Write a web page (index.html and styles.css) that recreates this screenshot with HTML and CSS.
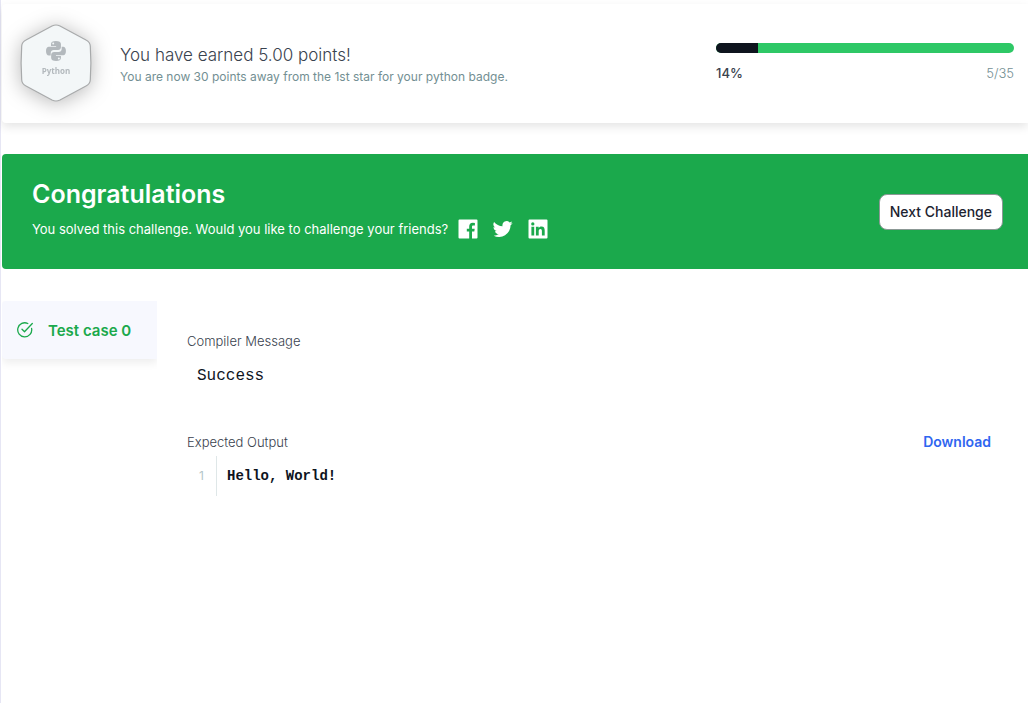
FILE: index.html
```html
<!DOCTYPE html>
<html lang="en">
<head>
<meta charset="utf-8">
<title>Challenge result</title>
<link rel="stylesheet" href="styles.css">
</head>
<body>
<main class="page">
  <section class="points-card">
    <svg class="badge" viewBox="0 0 72 78" role="img" aria-label="Python">
      <path d="M32 2Q36 0 40 2L66 16Q70 18 70.300 22Q71.500 39 70.300 56Q70 60 66 62L40 76Q36 78 32 76L6 62Q2 60 1.700 56Q.5 39 1.700 22Q2 18 6 16Z" fill="#f3f7f8" stroke="#a8aaab" stroke-width="1.200"/>
      <g transform="translate(26 17) scale(.83)" fill="#b3b9bd">
        <path d="M11.900 0C8 0 6 1.300 6 3.500V6h6.200v.9H3.500C1.200 6.900 0 9 0 12s1.200 5.500 3.500 5.500h2.200v-3c0-2 1.600-3.600 3.600-3.600h5.300c1.900 0 3.400-1.400 3.400-3.300V3.500C18 1.300 15.800 0 11.900 0ZM8.700 1.700a1.200 1.200 0 1 1 0 2.400 1.200 1.200 0 0 1 0-2.400Z"/>
        <path d="M18.900 6.900v2.800c0 2.200-1.700 3.700-3.700 3.700H9.700c-1.900 0-3.500 1.400-3.500 3.300v3.800C6.200 22.700 8.400 24 12.200 24s5.800-1.300 5.800-3.500V18h-6v-.9h8.700c2.300 0 3.300-2.200 3.300-5.100s-1.200-5.100-3.300-5.100ZM15.500 20a1.200 1.200 0 1 1 0 2.400 1.200 1.200 0 0 1 0-2.400Z"/>
      </g>
      <text class="badge-name" x="36" y="50" text-anchor="middle">Python</text>
    </svg>
    <div class="points-text">
      <h2 class="points-title">You have earned 5.00 points!</h2>
      <p class="points-note">You are now 30 points away from the 1st star for your python badge.</p>
    </div>
    <div class="progress">
      <div class="progress-track" role="progressbar" aria-label="Badge progress" aria-valuenow="14" aria-valuemin="0" aria-valuemax="100"><div class="progress-fill" style="width:14%"></div></div>
      <div class="progress-labels"><span class="percent">14%</span><span class="score">5/35</span></div>
    </div>
  </section>

  <section class="banner">
    <div class="banner-text">
      <h1 class="banner-title">Congratulations</h1>
      <div class="share">
        <p class="share-text">You solved this challenge. Would you like to challenge your friends?</p>
        <div class="socials">
          <a class="social" href="#facebook" aria-label="Facebook"><svg viewBox="0 0 20 20"><path fill="#fff" d="M1.500.5h17q1 0 1 1v17q0 1-1 1h-4.500v-7h2.300l.4-2.700h-2.700V7.900c0-.9.3-1.400 1.500-1.400h1.400V3.900l-2.100-.1c-2.400 0-3.600 1.400-3.600 3.700v2.300H8.800v2.700h2.400v7h-9.700q-1 0-1-1v-17q0-1 1-1Z"/></svg></a>
          <a class="social" href="#twitter" aria-label="Twitter"><svg viewBox="0 0 24 24"><path fill="#fff" d="M23.600 4.900c-.9.400-1.800.7-2.800.8 1-.6 1.800-1.600 2.200-2.700-1 .6-2 1-3.100 1.200A4.900 4.900 0 0 0 11.500 8.700 14 14 0 0 1 1.300 3.600a4.900 4.900 0 0 0 1.500 6.600c-.8 0-1.600-.2-2.200-.6v.1c0 2.400 1.700 4.400 3.900 4.800-.7.200-1.500.2-2.200.1.600 2 2.400 3.400 4.600 3.400A9.900 9.900 0 0 1 .8 20 14 14 0 0 0 21.100 7.500c1-.7 1.800-1.600 2.500-2.600Z"/></svg></a>
          <a class="social" href="#linkedin" aria-label="LinkedIn"><svg viewBox="0 0 20 20"><path fill="#fff" fill-rule="evenodd" d="M1.500.5h17q1 0 1 1v17q0 1-1 1h-17q-1 0-1-1v-17q0-1 1-1ZM3.400 7.800v8.800h2.800V7.800ZM4.800 3.300a1.600 1.600 0 1 0 0 3.300 1.600 1.600 0 0 0 0-3.300ZM7.900 7.800v8.800h2.800v-4.400c0-1.300.4-2.300 1.700-2.300s1.500 1 1.500 2.400v4.300h2.800v-4.900c0-2.500-.7-4.100-3.300-4.100-1.300 0-2.200.7-2.700 1.400V7.800Z"/></svg></a>
        </div>
      </div>
    </div>
    <button class="next" type="button">Next Challenge</button>
  </section>

  <section class="results">
    <button class="test-tab" type="button">
      <svg class="check" viewBox="0 0 16 16" fill="none" stroke="#1ba94c" stroke-width="1.300" stroke-linecap="round" stroke-linejoin="round"><path d="M10.800 1.500A7 7 0 1 0 14.600 6.500M5 7.300 7.500 9.800 15.300 1.500"/></svg>
      Test case 0
    </button>
    <div class="details">
      <h3 class="label">Compiler Message</h3>
      <pre class="message">Success</pre>
      <div class="output-head">
        <h3 class="label">Expected Output</h3>
        <a class="download" href="#download">Download</a>
      </div>
      <div class="code"><span class="line-number">1</span><code class="line">Hello, World!</code></div>
    </div>
  </section>
</main>
</body>
</html>
```
FILE: styles.css
```css
* { box-sizing: border-box; }
body { margin: 0; background: #fff; font-family: Inter, "Liberation Sans", sans-serif; }
h1, h2, h3, p, pre { margin: 0; }
.page { min-height: 100vh; padding: 4px 0 0 1px; border-left: 1px solid #e6e6f4; }

.points-card {
  display: flex;
  align-items: center;
  min-height: 119px;
  padding: 18px 14px 20px 18px;
  border-radius: 4px 0 0 4px;
  box-shadow: 0 4px 10px rgba(0, 0, 0, .1);
}
.badge { flex: none; width: 72px; height: 78px; border-radius: 50%; overflow: visible; filter: drop-shadow(0 2px 10px rgba(0, 0, 0, .28)); }
.badge-name { font: 700 8px "Open Sans", sans-serif; fill: #b3b9bd; }
.points-text { flex: 1; padding: 4px 0 0 28px; }
.points-title { font-size: 17px; line-height: 24px; font-weight: 300; color: #39424e; }
.points-note { font-size: 12px; line-height: 20px; font-weight: 400; color: #738f93; }
.progress { width: 30%; max-width: 298px; }
.progress-track { height: 10px; overflow: hidden; border-radius: 5px; background: #2ec866; }
.progress-fill { height: 100%; background: #0e141e; }
.progress-labels { display: flex; justify-content: space-between; padding-top: 10px; font-size: 13px; line-height: 20px; }
.percent { font-weight: 500; color: #39424e; }
.score { font-weight: 300; color: #738f93; }

.banner {
  display: flex;
  align-items: center;
  justify-content: space-between;
  min-height: 115px;
  margin-top: 31px;
  padding: 20px 25px 20px 30px;
  border-radius: 4px 0 0 4px;
  background: #1ba94c;
  color: #fff;
}
.banner-text { padding-bottom: 6px; }
.banner-title { font-size: 25px; line-height: 32px; font-weight: 600; }
.share { display: flex; align-items: center; gap: 10px; padding-top: 9px; }
.share-text { font-size: 13px; line-height: 20px; }
.socials { display: flex; gap: 15px; }
.social { width: 20px; height: 20px; }
.social svg { display: block; width: 20px; height: 20px; }
.next {
  height: 36px;
  padding: 0 10px;
  border: 1px solid #8b9895;
  border-radius: 8px;
  background: #fff;
  color: #1c2330;
  font: 500 14px Inter, sans-serif;
}

.results { display: flex; align-items: flex-start; margin-top: 32px; }
.test-tab {
  display: flex;
  align-items: center;
  gap: 15px;
  width: 155px;
  height: 58px;
  padding: 0 15px;
  border: 0;
  border-radius: 4px 0 0 4px;
  background: #f7f8fe;
  box-shadow: 0 4px 8px rgba(0, 0, 0, .07);
  clip-path: inset(0 0 -16px 0);
  color: #1ba94c;
  font: 600 15px Inter, sans-serif;
  white-space: nowrap;
}
.check { width: 16px; height: 16px; flex: none; }
.details { flex: 1; padding: 30px 37px 0 30px; }
.label { font-size: 13px; line-height: 20px; font-weight: 300; color: #39424e; }
.message { padding: 13px 10px 0; font: 16px/24px "Liberation Mono", monospace; color: #0e141e; }
.output-head { display: flex; justify-content: space-between; margin-top: 44px; }
.download { font-size: 14px; line-height: 20px; font-weight: 600; color: #2f66f0; text-decoration: none; }
.code { display: flex; margin-top: 4px; line-height: 40px; }
.line-number { width: 30px; padding-right: 12px; border-right: 1px solid #dfe7e8; text-align: right; font-size: 12px; color: #b3c6c8; }
.line { padding-left: 10px; font: 700 14px/40px "Liberation Mono", monospace; color: #0e141e; }
```
